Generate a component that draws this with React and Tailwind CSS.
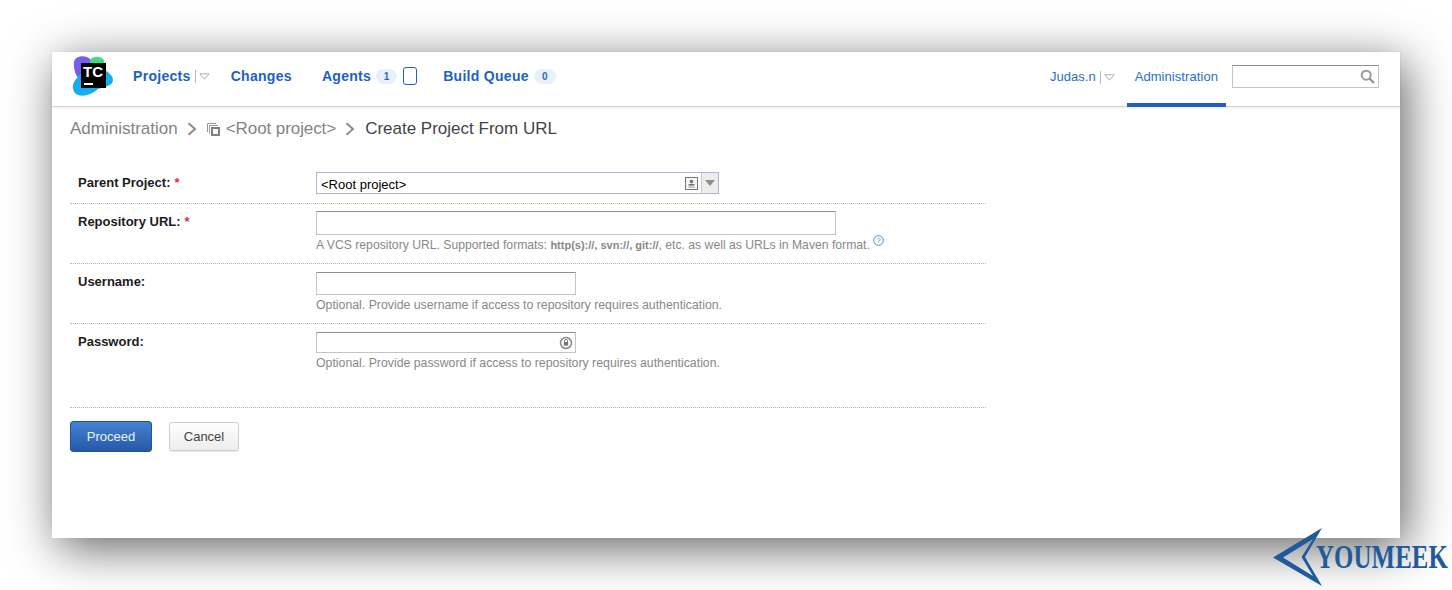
import React from 'react';

function Caret() {
  return (
    <span className="flex items-center gap-[3px] ml-[4px]">
      <span className="w-px h-[13px] bg-[#b9b9b9]" />
      <svg width="11" height="7" viewBox="0 0 11 7">
        <path d="M0.8 0.8H10.2L5.5 6.2Z" fill="#fff" stroke="#adadad" strokeWidth="1" />
      </svg>
    </span>
  );
}

function Counter({ value, className }) {
  return (
    <span className={`h-[15px] rounded-full bg-[#e8f0f9] text-[#2b6cc4] text-[10px] font-bold tracking-normal flex items-center justify-center ${className}`}>
      {value}
    </span>
  );
}

function TcLogo() {
  return (
    <svg width="42" height="42" viewBox="0 0 42 42" className="shrink-0 mb-[4px]">
      <path d="M2 6C3 1 9 -1 15 1C20 3 22 8 20 14L10 24C5 24 1 14 2 6Z" fill="#7b5bea" />
      <path d="M18 4C21 0 28 0 31 3C34 7 32 12 28 14L18 12Z" fill="#3ddc84" />
      <path d="M12 14L28 10C32 14 41 18 41 24C41 30 32 31 26 33C18 40 8 42 3 37C-1 32 1 26 5 22Z" fill="#13aef0" />
      <rect x="9" y="7" width="25" height="25" fill="#000" />
      <rect x="12" y="27" width="9" height="2" fill="#fff" />
      <text x="11" y="20.5" fill="#fff" fontSize="15" fontWeight="700" fontFamily="'Liberation Sans', sans-serif">TC</text>
    </svg>
  );
}

function Chevron({ className }) {
  return (
    <svg width="10" height="14" viewBox="0 0 10 14" className={className}>
      <path d="M1.5 1.2L8 7L1.5 12.8" fill="none" stroke="#8c8c8c" strokeWidth="2" />
    </svg>
  );
}

function Row({ label, required, children, className, labelClass }) {
  return (
    <div className={`flex border-b border-dotted border-[#b5b5b5] ${className}`}>
      <div className={`w-[246px] pl-[8px] shrink-0 font-bold text-[13px] text-[#1c1c1c] ${labelClass}`}>
        {label}
        {required && <span className="text-[#e03030] ml-[4px] font-bold">*</span>}
      </div>
      <div>{children}</div>
    </div>
  );
}

function Hint({ children, size }) {
  return <div className={`${size} leading-[14px] text-[#888] mt-[3px] whitespace-nowrap`}>{children}</div>;
}

function TextBox({ width, height }) {
  return <div className={`${width} ${height} border border-[#c4c4c4] border-t-[#8f8f8f] bg-white`} />;
}

export default function App() {
  return (
    <div className="relative w-[1452px] h-[590px] overflow-hidden bg-white font-['Liberation_Sans',Arial,sans-serif]">
      <div className="absolute left-[52px] top-[52px] w-[1348px] h-[486px] bg-white shadow-[6px_10px_45px_rgba(0,0,0,0.62)]">
        {/* TOP NAV */}
        <header className="h-[55px] border-b border-[#d4d4d4] shadow-[0_1px_3px_rgba(0,0,0,0.08)] flex items-center pl-[20px] pr-[21px]">
          <TcLogo />
          <nav className="flex items-center ml-[19px] mb-[6px] text-[14px] font-bold tracking-[0.3px] text-[#1d61c2]">
            <span className="flex items-center">Projects<Caret /></span>
            <span className="ml-[21px]">Changes</span>
            <span className="ml-[30px] flex items-center">
              Agents<Counter value="1" className="ml-[5px] w-[21px]" />
              <span className="ml-[6px] w-[14px] h-[18px] border border-[#1d61c2] rounded-[3px]" />
            </span>
            <span className="ml-[26px] flex items-center">Build Queue<Counter value="0" className="ml-[5px] w-[22px]" /></span>
          </nav>
          <div className="ml-auto flex items-center h-full text-[13px] text-[#2a6fd0]">
            <span className="flex items-center mb-[4px]">Judas.n<Caret /></span>
            <span className="ml-[12px] h-full px-[8px] pb-[1px] flex items-center border-b-[4px] border-[#1d61c2] -mb-px tracking-[0.07px]">Administration</span>
            <div className="ml-[6px] mb-[6px] w-[147px] h-[23px] border border-[#c4c4c4] border-t-[#8f8f8f] flex items-center justify-end pr-[3px]">
              <svg width="15" height="15" viewBox="0 0 15 15">
                <circle cx="6.2" cy="6.2" r="4.5" fill="none" stroke="#999" strokeWidth="2" />
                <path d="M9.5 9.5L14 14" stroke="#999" strokeWidth="2.4" />
              </svg>
            </div>
          </div>
        </header>

        {/* BREADCRUMB */}
        <div className="flex items-center h-[20px] mt-[12px] ml-[18px] text-[17px] text-[#848484]">
          <span>Administration</span>
          <Chevron className="ml-[9px] mr-[10px]" />
          <svg width="13" height="13" viewBox="0 0 13 13" className="mr-[6px]">
            <path d="M0.5 9V0.5H9" fill="none" stroke="#999" />
            <path d="M2.5 10.5V2.5H11" fill="none" stroke="#999" />
            <rect x="5" y="5" width="7" height="7" fill="none" stroke="#808080" strokeWidth="2" />
          </svg>
          <span className="tracking-[-0.08px]">&lt;Root project&gt;</span>
          <Chevron className="ml-[9px] mr-[10px]" />
          <span className="text-[#444]">Create Project From URL</span>
        </div>

        {/* FORM */}
        <div className="ml-[18px] mt-[33px] w-[916px]">
          <Row label="Parent Project:" required className="h-[32px]" labelClass="pt-px">
            <div className="flex w-[403px] h-[22px] border border-[#b4b4cc] bg-white">
              <div className="flex-1 pl-[4px] text-[13px] leading-[23px] text-black">&lt;Root project&gt;</div>
              <svg width="13" height="13" viewBox="0 0 13 13" className="self-center mr-[3px]">
                <rect x="0.5" y="0.5" width="12" height="12" fill="#f5f5f5" stroke="#777" />
                <circle cx="6.5" cy="4.6" r="1.8" fill="#777" />
                <rect x="3.5" y="7" width="6" height="1.6" fill="#777" />
                <rect x="3.5" y="9.6" width="6" height="1" fill="#999" />
              </svg>
              <div className="w-[17px] border-l border-[#c8c8d8] bg-[#ececec] flex items-center justify-center">
                <svg width="10" height="6" viewBox="0 0 10 6"><path d="M0 0H10L5 6Z" fill="#8e8e8e" /></svg>
              </div>
            </div>
          </Row>
          <Row label="Repository URL:" required className="h-[60px] pt-[7px]" labelClass="pt-px">
            <TextBox width="w-[520px]" height="h-[24px]" />
            <Hint size="text-[12.2px]">
              A VCS repository URL. Supported formats: <b className="text-[11px]">http(s)://, svn://, git://</b>, etc. as well as URLs in Maven format.
              <svg width="11" height="11" viewBox="0 0 11 11" className="inline-block ml-[3px] relative -top-[5px] align-middle">
                <circle cx="5.5" cy="5.5" r="4.8" fill="none" stroke="#3f8fbe" />
                <text x="5.5" y="8.2" textAnchor="middle" fontSize="8" fill="#3f8fbe" fontFamily="'Liberation Sans', sans-serif">?</text>
              </svg>
            </Hint>
          </Row>
          <Row label="Username:" className="h-[60px] pt-[8px]">
            <TextBox width="w-[260px]" height="h-[23px]" />
            <Hint size="text-[12.3px]">Optional. Provide username if access to repository requires authentication.</Hint>
          </Row>
          <Row label="Password:" className="h-[84px] pt-[8px]">
            <div className="w-[260px] h-[21px] border border-[#c4c4c4] border-t-[#8f8f8f] flex items-center justify-end pr-[2px]">
              <svg width="14" height="14" viewBox="0 0 14 14">
                <circle cx="7" cy="7" r="5.5" fill="none" stroke="#888" strokeWidth="1.5" />
                <rect x="4.8" y="6" width="4.4" height="3.6" fill="#777" />
                <path d="M5.5 6V4.8a1.5 1.5 0 013 0V6" fill="none" stroke="#777" />
              </svg>
            </div>
            <Hint size="text-[12.3px]">Optional. Provide password if access to repository requires authentication.</Hint>
          </Row>
        </div>

        {/* BUTTONS */}
        <div className="ml-[18px] mt-[13px] flex items-center gap-[17px] text-[13px]">
          <button className="w-[82px] h-[31px] rounded-[3px] border border-[#1f559f] bg-gradient-to-b from-[#4483d2] to-[#2758a8] text-white/90">Proceed</button>
          <button className="w-[70px] h-[29px] rounded-[3px] border border-[#cfcfcf] bg-gradient-to-b from-white to-[#ececec] text-[#444] shadow-[0_1px_1px_rgba(0,0,0,0.1)]">Cancel</button>
        </div>
      </div>

      {/* WATERMARK */}
      <div className="absolute left-[1272px] top-[528px] flex items-center">
        <svg width="51" height="59" viewBox="0 0 51 59">
          <path d="M1 29.5L50 0L33 29L50 58Z M11 29.5L29.5 29L41 11Z M11 29.5L29.5 29L41 48Z" fillRule="evenodd" fill="#1f5a9c" />
        </svg>
        <span className="-ml-[7px] -mt-[2px] font-['Liberation_Serif',serif] font-bold text-[34px] leading-none tracking-[0.2px] text-[#1f5a9c] scale-x-[0.73] origin-left whitespace-nowrap">YOUMEEK</span>
      </div>
    </div>
  );
}
